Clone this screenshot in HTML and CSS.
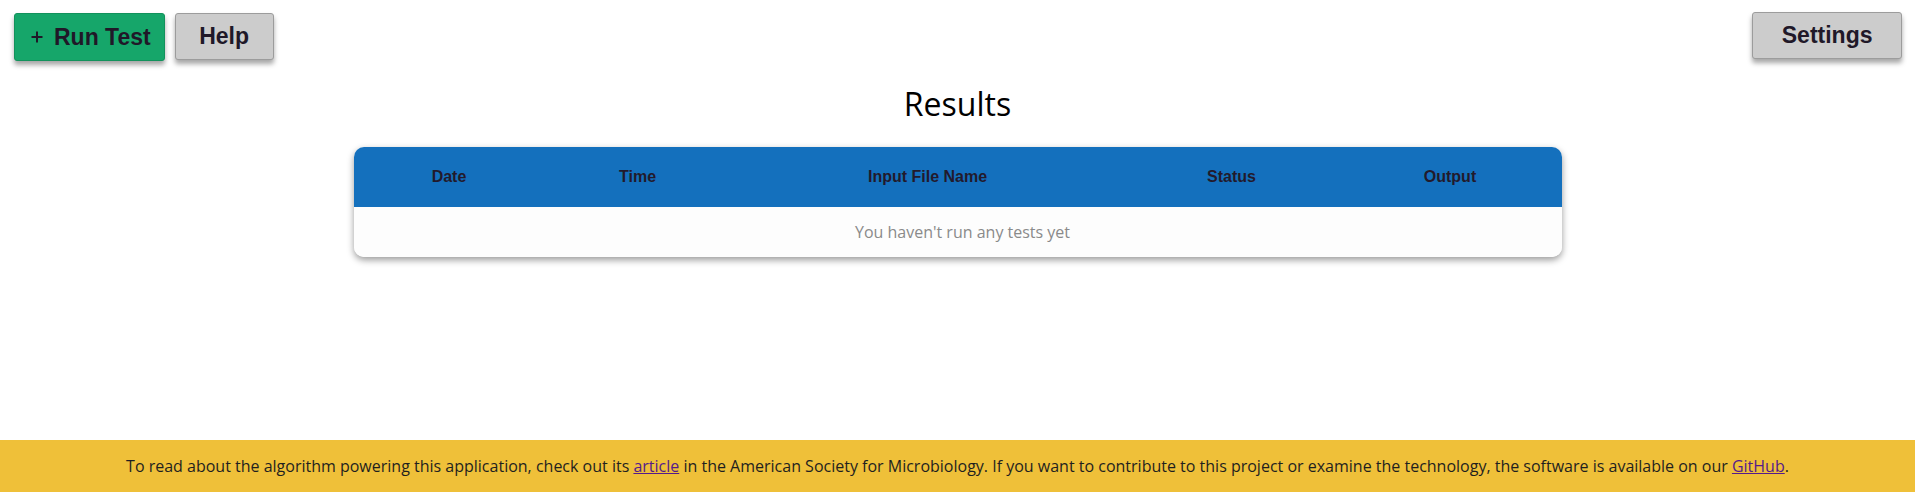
FILE: index.html
```html
<!DOCTYPE html>
<html lang="en">
<head>
<meta charset="utf-8">
<title>Results</title>
<link rel="stylesheet" href="styles.css">
</head>
<body>
<div class="page">
  <header class="topbar">
    <div class="left-actions">
      <button class="btn btn-run" type="button">
        <svg class="plus" width="12" height="12" viewBox="0 0 12 12" aria-hidden="true"><path d="M6 0.5V11.5M0.5 6H11.5" stroke="#201828" stroke-width="2" fill="none"/></svg>
        <span>Run Test</span>
      </button>
      <button class="btn btn-help" type="button">Help</button>
    </div>
    <button class="btn btn-settings" type="button">Settings</button>
  </header>

  <main class="content">
    <h1 class="title">Results</h1>
    <div class="card">
      <table class="results">
        <thead>
          <tr>
            <th class="c-date">Date</th>
            <th class="c-time">Time</th>
            <th class="c-file">Input File Name</th>
            <th class="c-status">Status</th>
            <th class="c-output">Output</th>
          </tr>
        </thead>
        <tbody>
          <tr>
            <td colspan="5" class="empty">You haven't run any tests yet</td>
          </tr>
        </tbody>
      </table>
    </div>
  </main>

  <footer class="footer">
    To read about the algorithm powering this application, check out its <a href="#article" class="visited">article</a> in the American Society for Microbiology. If you want to contribute to this project or examine the technology, the software is available on our <a href="#github" class="visited">GitHub</a>.
  </footer>
</div>
</body>
</html>
```

FILE: styles.css
```css
html, body {
  margin: 0;
  padding: 0;
  background: #ffffff;
}

body {
  font-family: "Open Sans", "Liberation Sans", Arial, sans-serif;
  color: #000000;
}

.page {
  min-height: 100vh;
  display: flex;
  flex-direction: column;
}

.topbar {
  display: flex;
  justify-content: space-between;
  align-items: flex-start;
  padding: 13px 13px 0 14px;
}

.left-actions {
  display: flex;
  gap: 10px;
}

.btn {
  box-sizing: border-box;
  height: 48px;
  display: inline-flex;
  align-items: center;
  justify-content: center;
  font-family: "Liberation Sans", Arial, sans-serif;
  font-weight: bold;
  font-size: 23px;
  color: #201828;
  border-radius: 3px;
  cursor: pointer;
  box-shadow: 0 4px 5px rgba(0, 0, 0, 0.35);
  margin: 0;
}

.btn-run {
  background: #16a66a;
  border: 1px solid #12925c;
  padding: 0 13px 0 16px;
  gap: 11px;
}

.plus {
  display: block;
}

.btn-help {
  background: #cccccc;
  border: 1px solid #9c9c9c;
  padding: 0 23.5px;
  height: 47px;
}

.btn-settings {
  background: #cccccc;
  border: 1px solid #9c9c9c;
  padding: 0 28.5px;
  height: 47px;
  margin-top: -1px;
}

.content {
  flex: 1;
  display: flex;
  flex-direction: column;
  align-items: center;
}

.title {
  font-family: "Open Sans", sans-serif;
  font-weight: 400;
  font-size: 32px;
  line-height: 44px;
  margin: 21px 0 21px 0;
}

.card {
  width: 1208px;
  border-radius: 10px;
  overflow: hidden;
  box-shadow: 0 3px 7px rgba(0, 0, 0, 0.4);
  background: #fdfdfd;
}

.results {
  width: 100%;
  border-collapse: collapse;
  table-layout: fixed;
}

.results thead tr {
  background: #1470bd;
}

.results th {
  height: 60px;
  padding: 0;
  font-family: "Liberation Sans", Arial, sans-serif;
  font-weight: bold;
  font-size: 16px;
  color: #221a2c;
  text-align: center;
}

.c-date { width: 191px; }
.c-time { width: 186px; }
.c-file { width: 394px; }
.c-status { width: 214px; }
.c-output { width: 223px; }

.empty {
  height: 50px;
  padding: 0 0 0 10px;
  text-align: center;
  font-family: "Open Sans", sans-serif;
  font-size: 16px;
  color: #8a8a8a;
  background: #fdfdfd;
}

.footer {
  background: #efc039;
  color: #1f1f1f;
  font-family: "Open Sans", sans-serif;
  font-size: 16px;
  line-height: 24px;
  padding: 14px 0;
  text-align: center;
}

.footer a.visited {
  color: #551a8b;
  text-decoration: underline;
}
```
